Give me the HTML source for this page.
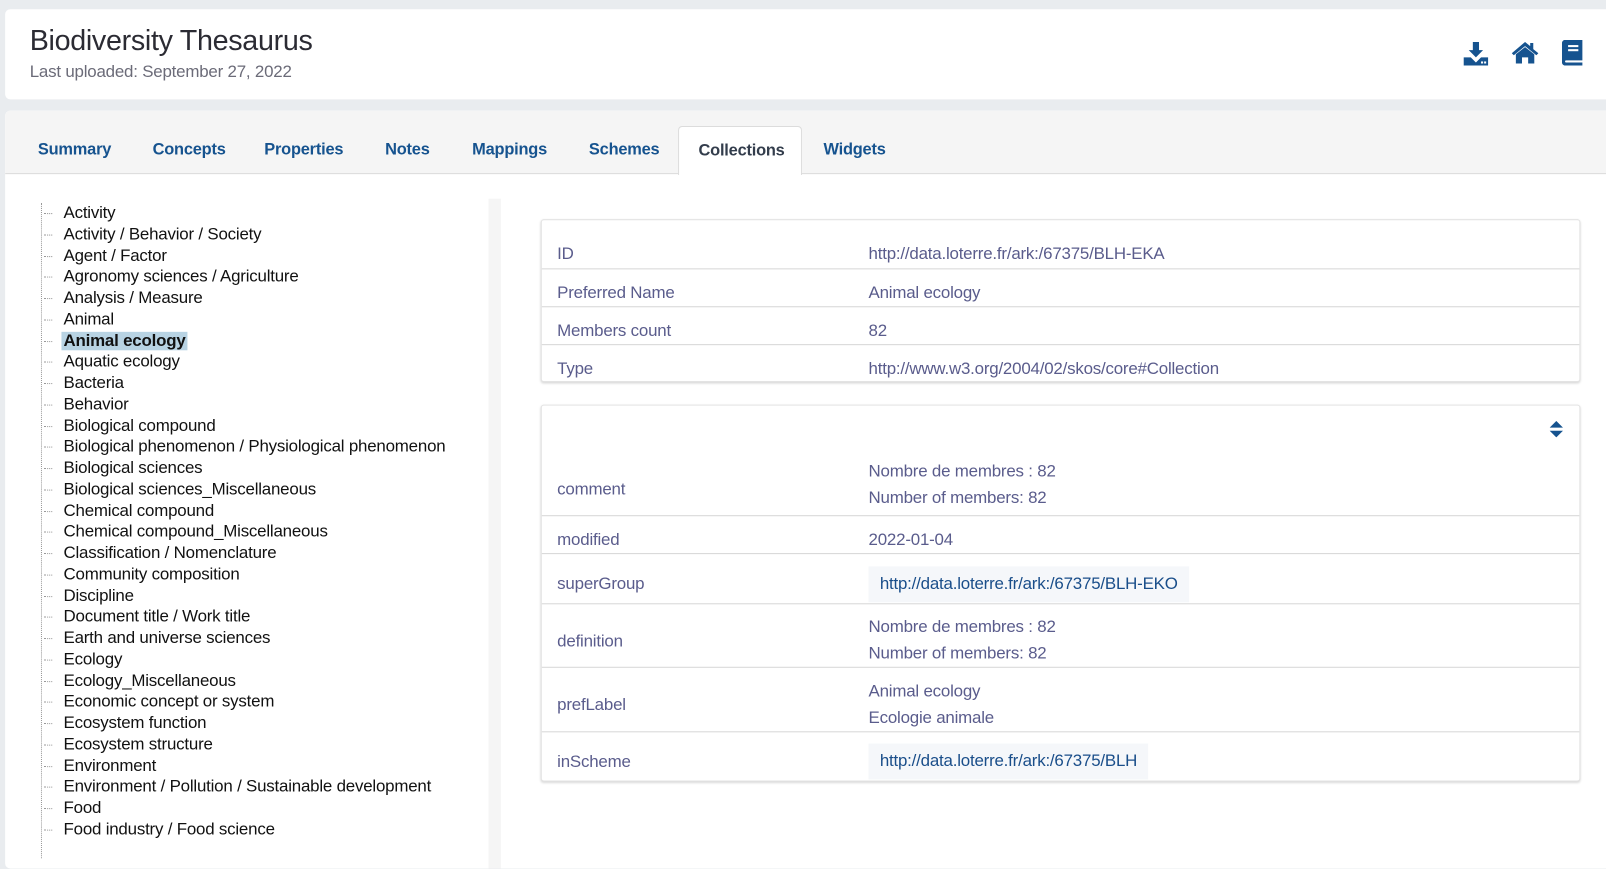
<!DOCTYPE html>
<html><head><meta charset="utf-8"><style>
*{box-sizing:border-box;margin:0;padding:0}
html,body{width:1606px;height:840px;overflow:hidden;background:#e9ecef;font-family:"Liberation Sans",sans-serif}
#w{position:absolute;left:0;top:0;width:1568px;height:820px;transform:scale(1.02423);transform-origin:0 0}
.hdr{position:absolute;left:5px;top:9px;width:1601px;height:88px;background:#fff;border-radius:5px}
.hdr h1{position:absolute;left:24px;top:15px;font-size:28px;font-weight:normal;color:#2b2b33;letter-spacing:-0.3px}
.hdr .sub{position:absolute;left:24px;top:52px;font-size:16.5px;color:#6b6b78;letter-spacing:-0.2px}
.icons svg{position:absolute;fill:#16538f}
.main{position:absolute;left:5px;top:108px;width:1601px;height:740px;background:#fff;border-radius:5px;overflow:hidden}
.tabs{position:absolute;left:0;top:0;width:100%;height:62px;background:#f5f5f5;border-bottom:1px solid #dcdcdc}
.tab{position:absolute;top:30px;font-size:16px;font-weight:bold;color:#16538f;letter-spacing:-0.2px}
.tab.act{top:15px;height:48px;background:#fff;border:1px solid #dcdcdc;border-bottom:none;border-radius:4px 4px 0 0;color:#333d4c;padding:15px 19px 0}
.tree{position:absolute;left:35px;top:90px;border-left:1px dotted #999;height:640px}
.tree div{position:relative;height:20.75px;line-height:20.75px;font-size:16.5px;color:#111;padding-left:21px;letter-spacing:-0.2px;white-space:nowrap}
.tree div:before{content:"";position:absolute;left:2px;top:10px;width:8px;border-top:1px dotted #999}
.tree .sel span{background:#b8d3e3;font-weight:bold;padding:0 2px;margin-left:-2px}
.strip{position:absolute;left:472px;top:86px;width:12px;height:660px;background:#f5f5f5}
.card{position:absolute;left:523px;width:1015px;background:#fff;border:1px solid #e3e3e3;border-radius:3px;box-shadow:0 1px 2px rgba(0,0,0,.15)}
.row{position:relative;border-bottom:1px solid #d7d7d7;color:#5a5c8c;font-size:16.5px;letter-spacing:-0.2px}
.row:last-child{border-bottom:none}
.row .l{position:absolute;left:15px}
.row .v{position:absolute;left:319px}
.chip{position:absolute;left:319px;background:#f5f7fa;color:#1a4e8a;padding:0 11px;height:35px;line-height:35px}
</style></head><body><div id="w">
<div class="hdr">
<h1>Biodiversity Thesaurus</h1>
<div class="sub">Last uploaded: September 27, 2022</div>
<div class="icons">
<svg style="left:1424px;top:31px" width="24" height="24" viewBox="0 0 24 24"><path d="M9 1h6v8h4l-7 7-7-7h4z"/><path d="M0 16h7l5 5 5-5h7v8H0z"/><rect x="17" y="20" width="2" height="2" fill="#fff"/><rect x="20" y="20" width="2" height="2" fill="#fff"/></svg>
<svg style="left:1471px;top:31px" width="26" height="22" viewBox="0 0 26 22"><path d="M13 1L0 12l2 2 11-9 11 9 2-2-5-4V2h-3v3z"/><path d="M4 13l9-7 9 7v9h-6v-6h-6v6H4z"/></svg>
<svg style="left:1520px;top:30px" width="20" height="25" viewBox="0 0 20 25"><path d="M3 0h17v20H4a1 1 0 0 0 0 2h16v3H3a3 3 0 0 1-3-3V3a3 3 0 0 1 3-3z"/><rect x="6" y="5" width="10" height="2" fill="#fff"/><rect x="6" y="9" width="10" height="2" fill="#fff"/></svg>
</div>
</div>
<div class="main">
<div class="tabs">
<div class="tab" style="left:32px">Summary</div>
<div class="tab" style="left:144px">Concepts</div>
<div class="tab" style="left:253px">Properties</div>
<div class="tab" style="left:371px">Notes</div>
<div class="tab" style="left:456px">Mappings</div>
<div class="tab" style="left:570px">Schemes</div>
<div class="tab act" style="left:657px;width:121px">Collections</div>
<div class="tab" style="left:799px">Widgets</div>
</div>
<div class="tree">
<div>Activity</div><div>Activity / Behavior / Society</div><div>Agent / Factor</div><div>Agronomy sciences / Agriculture</div><div>Analysis / Measure</div><div>Animal</div><div class="sel"><span>Animal ecology</span></div><div>Aquatic ecology</div><div>Bacteria</div><div>Behavior</div><div>Biological compound</div><div>Biological phenomenon / Physiological phenomenon</div><div>Biological sciences</div><div>Biological sciences_Miscellaneous</div><div>Chemical compound</div><div>Chemical compound_Miscellaneous</div><div>Classification / Nomenclature</div><div>Community composition</div><div>Discipline</div><div>Document title / Work title</div><div>Earth and universe sciences</div><div>Ecology</div><div>Ecology_Miscellaneous</div><div>Economic concept or system</div><div>Ecosystem function</div><div>Ecosystem structure</div><div>Environment</div><div>Environment / Pollution / Sustainable development</div><div>Food</div><div>Food industry / Food science</div>
</div>
<div class="strip"></div>
<div class="card" style="top:106px;height:159px">
<div class="row" style="height:48px"><span class="l" style="top:24px">ID</span><span class="v" style="top:24px">http://data.loterre.fr/ark:/67375/BLH-EKA</span></div>
<div class="row" style="height:37px"><span class="l" style="top:14px">Preferred Name</span><span class="v" style="top:14px">Animal ecology</span></div>
<div class="row" style="height:37px"><span class="l" style="top:14px">Members count</span><span class="v" style="top:14px">82</span></div>
<div class="row" style="height:36px"><span class="l" style="top:14px">Type</span><span class="v" style="top:14px">http://www.w3.org/2004/02/skos/core#Collection</span></div>
</div>
<div class="card" style="top:287px;height:368px">
<svg style="position:absolute;left:984px;top:15px" width="13" height="16" viewBox="0 0 13 16"><path d="M6.5 0L13 6.5H0z M0 9.5h13L6.5 16z" fill="#16538f"/></svg>
<div style="height:45px"></div>
<div class="row" style="height:63px"><span class="l" style="top:28px">comment</span><span class="v" style="top:6px;line-height:26px">Nombre de membres : 82<br>Number of members: 82</span></div>
<div class="row" style="height:37px"><span class="l" style="top:14px">modified</span><span class="v" style="top:14px">2022-01-04</span></div>
<div class="row" style="height:49px"><span class="l" style="top:20px">superGroup</span><span class="chip" style="top:12px">http://data.loterre.fr/ark:/67375/BLH-EKO</span></div>
<div class="row" style="height:62px"><span class="l" style="top:27px">definition</span><span class="v" style="top:9px;line-height:26px">Nombre de membres : 82<br>Number of members: 82</span></div>
<div class="row" style="height:63px"><span class="l" style="top:27px">prefLabel</span><span class="v" style="top:10px;line-height:26px">Animal ecology<br>Ecologie animale</span></div>
<div class="row" style="height:48px"><span class="l" style="top:20px">inScheme</span><span class="chip" style="top:11px">http://data.loterre.fr/ark:/67375/BLH</span></div>
</div>
</div>
</div></body></html>
